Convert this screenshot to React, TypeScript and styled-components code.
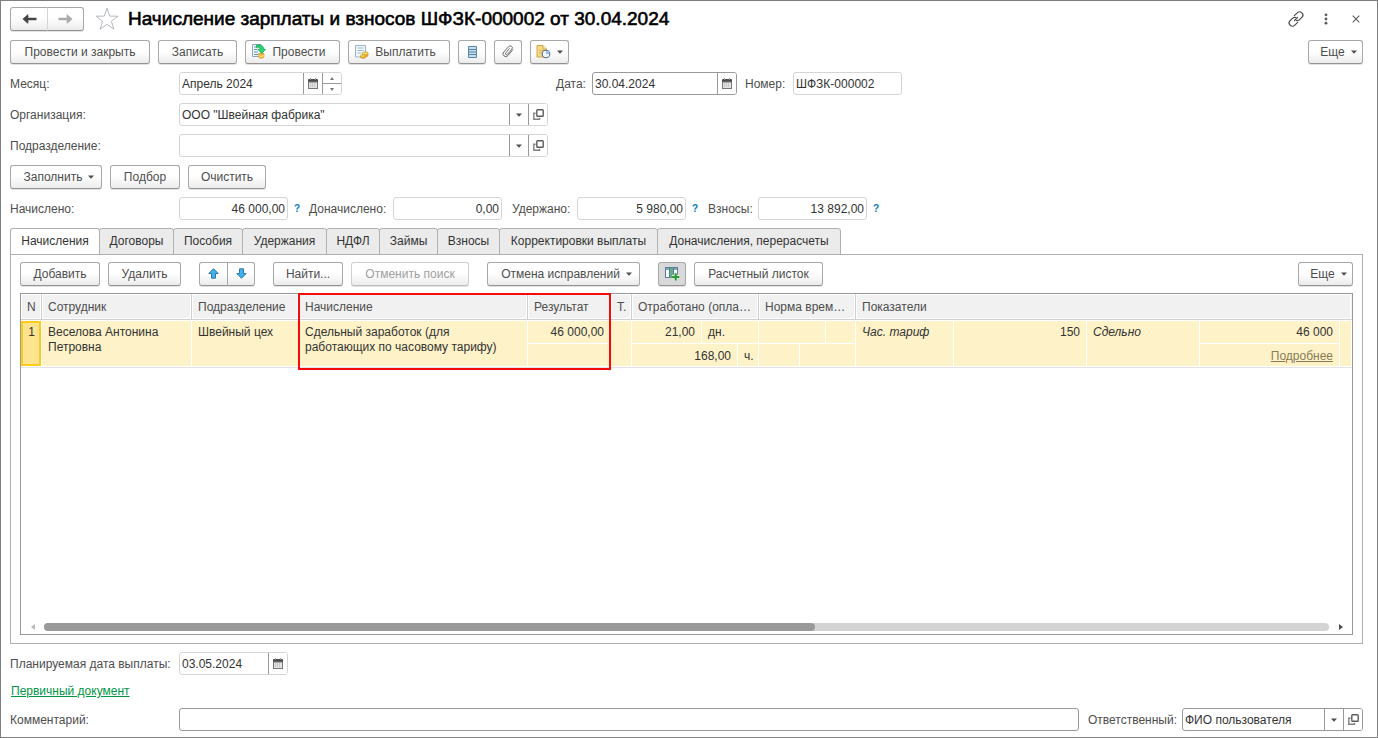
import React from 'react';
import styled, { createGlobalStyle, css } from 'styled-components';

const GlobalStyle = createGlobalStyle`
  * { box-sizing: border-box; }
  body { margin: 0; background: #fff; }
  body, button, input, select, table {
    font-family: "Liberation Sans", Arial, sans-serif;
    font-size: 12px;
    color: #333;
  }
  svg { display: block; flex: none; }
`;

const c = {
  text: '#4d4d4d',
  dark: '#333333',
  line: '#a8a8a8',
  soft: '#d5d5d5',
  cell: '#fef2c8',
};

/* ---------- page frame ---------- */

const Page = styled.div`
  min-height: 100vh;
  display: flex;
  flex-direction: column;
  gap: 8px;
  padding: 5px 14px 6px 9px;
  border: 1px solid #7f7f7f;
  background: #fff;
`;

const TitleRow = styled.header`
  display: flex;
  align-items: center;
  height: 26px;
  margin-right: -8px;
`;

const Title = styled.h1`
  flex: 1;
  margin: 0 0 0 6px;
  font-size: 19px;
  line-height: 24px;
  font-weight: 400;
  color: #000;
  -webkit-text-stroke: 0.6px #000;
  white-space: nowrap;
`;

const Row = styled.div`
  display: flex;
  align-items: center;
  gap: 8px;
`;

const Spacer = styled.div`
  flex: 1;
`;

const IconButton = styled.button`
  display: flex;
  align-items: center;
  justify-content: center;
  width: 30px;
  height: 24px;
  padding: 0;
  border: 0;
  background: none;
`;

const StarButton = styled(IconButton)`
  margin-left: 8px;
`;

/* ---------- buttons ---------- */

const Button = styled.button<{ $w: number; $pressed?: boolean }>`
  display: inline-flex;
  align-items: center;
  justify-content: center;
  gap: 6px;
  width: ${p => p.$w}px;
  height: 24px;
  padding: 0 0 1px;
  border: 1px solid ${c.line};
  border-bottom-color: #939393;
  border-radius: 3px;
  background: ${p => (p.$pressed ? '#d8d8d8' : 'linear-gradient(#fff 45%, #ececec)')};
  box-shadow: 0 1px 0 #e2e2e2;
  color: ${c.text};
  line-height: 20px;
  white-space: nowrap;

  &:disabled {
    color: #a0a0a0;
    border-color: #cfcfcf;
    border-bottom-color: #bdbdbd;
  }
`;

const MenuButton = styled(Button)`
  padding-left: 6px;
`;

const PictureButton = styled(Button)`
  padding-right: 7px;
`;

const Pair = styled.div`
  display: flex;

  & > button:first-child {
    border-radius: 3px 0 0 3px;
  }
  & > button:last-child {
    margin-left: -1px;
    border-radius: 0 3px 3px 0;
  }
`;

const NavPair = styled(Pair)`
  & > button:last-child {
    border-left-color: ${c.soft};
  }
`;

const ToolGroup = styled.div`
  display: flex;
  gap: 8px;
  margin-right: 10px;
`;

/* ---------- form fields ---------- */

const Label = styled.label<{ $w?: number }>`
  width: ${p => (p.$w ? `${p.$w}px` : 'auto')};
  color: ${c.text};
  line-height: 16px;
  white-space: nowrap;
`;

const FieldBox = styled.div<{ $w?: number; $strong?: boolean }>`
  display: flex;
  ${p => (p.$w ? css`width: ${p.$w}px;` : css`flex: 1;`)}
  height: 23px;
  border: 1px solid ${p => (p.$strong ? '#999' : c.soft)};
  border-radius: 3px;
  background: #fff;
  overflow: hidden;
`;

const Input = styled.input<{ $right?: boolean }>`
  flex: 1;
  min-width: 0;
  padding: 0 2px;
  border: 0;
  outline: 0;
  background: none;
  color: ${c.dark};
  text-align: ${p => (p.$right ? 'right' : 'left')};
`;

const FieldButton = styled.button`
  display: flex;
  align-items: center;
  justify-content: center;
  width: 19px;
  padding: 0;
  border: 0;
  border-left: 1px solid #999;
  background: #fff;
`;

const Spin = styled.div`
  display: flex;
  flex-direction: column;
  width: 19px;
  border-left: 1px solid #999;
`;

const SpinButton = styled.button`
  display: flex;
  flex: 1;
  align-items: center;
  justify-content: center;
  padding: 0;
  border: 0;
  background: #fff;

  & + & {
    border-top: 1px solid #999;
  }
`;

const LeftFields = styled.div`
  display: flex;
  align-items: center;
  width: 538px;
`;

const Totals = styled.div`
  display: grid;
  grid-template-columns: 169px 109px 21px 84px 109px 10px 65px 109px 22px 50px 109px 18px;
  align-items: center;
`;

const Help = styled.button`
  padding: 0;
  border: 0;
  background: none;
  color: #0a7abf;
  font-size: 10px;
  font-weight: 700;
  justify-self: start;
  margin-left: 6px;
`;

/* ---------- tabs ---------- */

const Tabs = styled.section`
  flex: 1;
  display: flex;
  flex-direction: column;
`;

const TabList = styled.div`
  display: flex;
`;

const Tab = styled.button<{ $w: number; $active?: boolean }>`
  width: ${p => p.$w}px;
  height: 27px;
  margin-bottom: -1px;
  padding: 0 0 2px;
  border: 1px solid #b0b0b0;
  border-radius: 3px 3px 0 0;
  background: ${p => (p.$active ? '#fff' : '#ebebeb')};
  ${p => p.$active && css`border-bottom-color: #fff;`}
  color: ${c.dark};
  white-space: nowrap;

  & + & {
    margin-left: -1px;
  }
`;

const Panel = styled.div`
  flex: 1;
  display: flex;
  flex-direction: column;
  gap: 7px;
  padding: 7px 9px 8px;
  border: 1px solid #b0b0b0;
`;

/* ---------- table ---------- */

const Grid = styled.div`
  position: relative;
  flex: 1;
  display: flex;
  flex-direction: column;
  border: 1px solid #999;
`;

const Highlight = styled.div`
  position: absolute;
  top: -1px;
  left: 277px;
  width: 313px;
  height: 77px;
  border: 2px solid #f50a0a;
  pointer-events: none;
`;

const Table = styled.table`
  width: 100%;
  table-layout: fixed;
  border-collapse: separate;
  border-spacing: 0;
`;

const Th = styled.th`
  height: 26px;
  padding: 0 2px 1px 6px;
  border-top: 1px solid #fff;
  border-right: 1px solid #cfcfcf;
  border-bottom: 1px solid #cfd0d6;
  background: #f1f1f1;
  box-shadow: inset -1px -1px 0 #fff, inset 1px 0 0 #fff;
  color: ${c.text};
  font-weight: 400;
  text-align: left;
  white-space: nowrap;

  &:last-child {
    border-right-color: #f1f1f1;
  }
`;

const Td = styled.td<{ $right?: boolean; $italic?: boolean }>`
  height: 23px;
  padding: 5px 6px 0;
  border-right: 1px solid #fff;
  border-bottom: 1px solid #fff;
  background: ${c.cell};
  color: ${c.dark};
  line-height: 15px;
  vertical-align: top;
  text-align: ${p => (p.$right ? 'right' : 'left')};
  font-style: ${p => (p.$italic ? 'italic' : 'normal')};
  white-space: ${p => (p.rowSpan === 2 ? 'normal' : 'nowrap')};

  tr:first-child > & {
    border-top: 1px solid #fff;
    height: 24px;
    padding-top: 4px;
  }
`;

const ActiveTd = styled(Td)`
  padding: 4px 4px 0 5px;
  background: #ffe48f;
  box-shadow: inset 0 0 0 2px #fccb1c;
  text-align: center;
`;

const RowEnd = styled.div`
  height: 1px;
  background: #e2e2e2;
`;

const MoreLink = styled.a`
  color: #857b55;
`;

const ScrollRow = styled.div`
  display: flex;
  align-items: center;
  height: 14px;
`;

const ScrollArrow = styled.button`
  display: flex;
  align-items: center;
  justify-content: center;
  width: 23px;
  height: 14px;
  padding: 0;
  border: 0;
  background: none;
`;

const Track = styled.div`
  flex: 1;
  height: 8px;
  border-radius: 4px;
  background: #d4d4d4;
`;

const Thumb = styled.div`
  width: 60%;
  height: 8px;
  border-radius: 4px;
  background: #999;
`;

/* ---------- footer ---------- */

const DocLink = styled.a`
  align-self: flex-start;
  margin-left: 1px;
  color: #009646;
  line-height: 17px;
`;

const Footer = styled.div`
  display: flex;
  align-items: center;
`;

const OwnerLabel = styled(Label)`
  margin-left: 9px;
`;

/* ---------- icons ---------- */

const Caret = () => (
  <svg width="6" height="4" viewBox="0 0 6 4"><path d="M0 0.5h6L3 3.8z" fill="#4d4d4d" /></svg>
);

const Arrow = ({ right, color }: { right?: boolean; color: string }) => (
  <svg width="15" height="12" viewBox="0 0 15 12">
    <g transform={right ? 'matrix(-1 0 0 1 15 0)' : undefined}>
      <path d="M.5 6L6.200 .9V4.700H14.500V7.300H6.200V11.100z" fill={color} />
      <path d="M6.200 3.400L3.900 6 6.200 8.600" fill="none" stroke={color} />
    </g>
  </svg>
);

const Star = () => (
  <svg width="24" height="24" viewBox="0 0 24 24">
    <path d="M12 1.2l2.7 7.9 8.4.1-6.7 5 2.5 8-6.9-4.8-6.9 4.8 2.5-8-6.7-5 8.4-.1z" fill="#fff" stroke="#b4b9bf" strokeWidth="1" />
  </svg>
);

const LinkIcon = () => (
  <svg width="18" height="18" viewBox="0 0 18 18" fill="none" stroke="#4d4d4d" strokeWidth="1.2" strokeLinecap="round">
    <path d="M7.300 5.700l2.900-2.900a3.200 3.200 0 0 1 4.700 0 3.200 3.200 0 0 1 0 4.500l-2.400 2.400a3.200 3.200 0 0 1-3.200.8" />
    <path d="M10.700 12.300l-2.900 2.900a3.200 3.200 0 0 1-4.700 0 3.200 3.200 0 0 1 0-4.500l2.400-2.400a3.200 3.200 0 0 1 3.200-.8" />
    <path d="M7.500 10.500l3-3" />
  </svg>
);

const Dots = () => (
  <svg width="4" height="12" viewBox="0 0 4 12" fill="#5c5c5c">
    <circle cx="2" cy="1.8" r="1.4" /><circle cx="2" cy="6" r="1.4" /><circle cx="2" cy="10.2" r="1.4" />
  </svg>
);

const Cross = () => (
  <svg width="8" height="8" viewBox="0 0 8 8"><path d="M.7.7l6.6 6.6M7.3.7L.7 7.3" stroke="#5c5c5c" strokeWidth="1.1" /></svg>
);

const Calendar = () => (
  <svg width="10" height="11" viewBox="0 0 10 11">
    <path d="M0 2a1 1 0 0 1 1-1h8a1 1 0 0 1 1 1v2H0z" fill="#4d4d4d" />
    <path d="M2 0h1v2H2zM7 0h1v2H7z" fill="#999" />
    <rect x=".5" y="4" width="9" height="6.5" fill="#e4e4e4" stroke="#777" />
    <path d="M2 6h6M2 8h6" stroke="#aaa" strokeDasharray="1 1" />
  </svg>
);

const OpenIcon = () => (
  <svg width="11" height="11" viewBox="0 0 11 11" fill="none" stroke="#5c5c5c" strokeWidth="1.4">
    <rect x="3.8" y=".8" width="6.4" height="6.4" rx=".8" />
    <path d="M2.600 4.200H.8v6h5.700V8.800" stroke="#808080" />
  </svg>
);

const SpinMark = ({ up }: { up?: boolean }) => (
  <svg width="4" height="3" viewBox="0 0 4 3"><path d={up ? 'M0 3L2 0l2 3z' : 'M0 0l2 3 2-3z'} fill="#777" /></svg>
);

const PostIcon = () => (
  <svg width="14" height="15" viewBox="0 0 14 15">
    <path d="M.5.5h8.500v12H.5z" fill="#f4f8fb" stroke="#8aa3b8" />
    <path d="M2 3h3M2 5.500h3M2 8h4M2 10.500h4" stroke="#5f8fb5" />
    <path d="M6.500 9.500v3.500c0 1.600 5.500 1.600 5.500 0V9.500z" fill="#efbd3c" stroke="#c4931e" strokeWidth=".6" />
    <path d="M6.500 11.300c0 1.400 5.500 1.400 5.500 0" fill="none" stroke="#fff0a8" strokeWidth=".8" />
    <path d="M4.500 1.300C8.500.3 11.700 1.800 11.700 5.300h1.900L9.800 9.300 5.700 5.300h2.500C8.200 3.500 6.800 2.900 4.500 3.300z" fill="#25d873" stroke="#0d9c48" strokeWidth=".7" />
  </svg>
);

const PayIcon = () => (
  <svg width="14" height="14" viewBox="0 0 14 14">
    <path d="M.5.5h10v11.500H.5z" fill="#f1f6fa" stroke="#9fb4c6" />
    <path d="M2.500 3h6M2.500 5.500h6M2.500 8h4" stroke="#9bbad2" />
    <path d="M7.500 8.500v2.300c0 1.500 5.500 1.500 5.500 0V8.500z" fill="#e9b02e" stroke="#c8951c" strokeWidth=".6" />
    <ellipse cx="10.300" cy="8.500" rx="2.800" ry="1.600" fill="#fbd75e" stroke="#c8951c" strokeWidth=".7" />
    <path d="M5.500 11v1.200c0 1.600 5 1.600 5 0V11z" fill="#e9b02e" stroke="#c8951c" strokeWidth=".6" />
    <ellipse cx="8" cy="11" rx="2.500" ry="1.300" fill="#fbd75e" stroke="#c8951c" strokeWidth=".6" />
  </svg>
);

const Register = () => (
  <svg width="9" height="12" viewBox="0 0 9 12">
    <path d="M.5.5h8v11h-8z" fill="#c4dcec" stroke="#5a87a8" />
    <path d="M1 3.500h7M1 6h7M1 8.500h7" stroke="#5a87a8" />
  </svg>
);

const Clip = () => (
  <svg width="12" height="13" viewBox="0 0 12 13" fill="none" stroke="#6a6a6a" strokeWidth="1" strokeLinecap="round">
    <path d="M10.800 4.700L6.100 10.500a2.700 2.700 0 0 1-4.500-3.300L6.600 1.700a2 2 0 0 1 3.300 2.400L5.500 9.300a1.100 1.100 0 0 1-1.800-1.300L7.400 3.700" />
  </svg>
);

const NoteClock = () => (
  <svg width="15" height="15" viewBox="0 0 15 15">
    <path d="M1 1.500h6l3.500 3.500v8H1z" fill="#f6d985" stroke="#cfa84a" />
    <path d="M7 1.500v3.500h3.500" fill="#fff1c2" stroke="#cfa84a" />
    <path d="M3 6.500h5M3 9h3" stroke="#d8b45a" />
    <circle cx="10" cy="10" r="3.800" fill="#f2f7fc" stroke="#5c6f8c" strokeWidth="1.100" />
    <path d="M10 7v3h3A3 3 0 0 0 10 7z" fill="#8fbdec" />
  </svg>
);

const Move = ({ down }: { down?: boolean }) => (
  <svg width="11" height="11" viewBox="0 0 11 11">
    <path d="M5.500.7l4.700 4.800H7.500v4.700h-4V5.500H.8z" transform={down ? 'rotate(180 5.500 5.500)' : undefined}
      fill="#3fb0f0" stroke="#256fa5" strokeWidth=".9" strokeLinejoin="round" />
  </svg>
);

const ColumnsPlus = () => (
  <svg width="15" height="14" viewBox="0 0 15 14">
    <rect x=".5" y=".5" width="12" height="10" fill="#fff" stroke="#5b7d96" />
    <path d="M1 1h11v2H1z" fill="#7fa6c0" />
    <path d="M5 1h3.500v9.500H5z" fill="#5fae8a" />
    <path d="M4.500 1v9.500M8.500 1v9.500" stroke="#5b7d96" />
    <path d="M10.500 6v7.500M7 9.800h7.500" stroke="#e4f2e0" strokeWidth="3.400" />
    <path d="M10.700 6.300v7.200M7.100 9.900h7.200" stroke="#27992f" strokeWidth="2" />
  </svg>
);

const Side = ({ right }: { right?: boolean }) => (
  <svg width="4" height="6" viewBox="0 0 4 6"><path d={right ? 'M0 0l4 3-4 3z' : 'M4 0L0 3l4 3z'} fill={right ? '#4d4d4d' : '#bbb'} /></svg>
);

/* ---------- composite controls ---------- */

const DateField = ({ id, w, value, strong, spin }: { id: string; w: number; value: string; strong?: boolean; spin?: boolean }) => (
  <FieldBox $w={w} $strong={strong}>
    <Input id={id} defaultValue={value} />
    <FieldButton aria-label="Календарь"><Calendar /></FieldButton>
    {spin && (
      <Spin>
        <SpinButton aria-label="Вперед"><SpinMark up /></SpinButton>
        <SpinButton aria-label="Назад"><SpinMark /></SpinButton>
      </Spin>
    )}
  </FieldBox>
);

const RefField = ({ id, w, value, strong }: { id: string; w: number; value: string; strong?: boolean }) => (
  <FieldBox $w={w} $strong={strong}>
    <Input id={id} defaultValue={value} />
    <FieldButton aria-label="Выбрать"><Caret /></FieldButton>
    <FieldButton aria-label="Открыть"><OpenIcon /></FieldButton>
  </FieldBox>
);

const Amount = ({ id, value }: { id: string; value: string }) => (
  <FieldBox $w={109}><Input id={id} $right readOnly value={value} /></FieldBox>
);

const tabs: [string, number][] = [
  ['Начисления', 90], ['Договоры', 75], ['Пособия', 70], ['Удержания', 85], ['НДФЛ', 54],
  ['Займы', 59], ['Взносы', 63], ['Корректировки выплаты', 159], ['Доначисления, перерасчеты', 184],
];

const columns = [21, 150, 107, 229, 83, 21, 70, 36, 21, 41, 26, 30, 98, 133, 113, 140];

export default function App() {
  return (
    <>
      <GlobalStyle />
      <Page>
        <TitleRow>
          <NavPair>
            <Button $w={38} aria-label="Назад"><Arrow color="#444" /></Button>
            <Button $w={37} aria-label="Вперед"><Arrow right color="#aaa" /></Button>
          </NavPair>
          <StarButton aria-label="В избранное"><Star /></StarButton>
          <Title>Начисление зарплаты и взносов ШФЗК-000002 от 30.04.2024</Title>
          <IconButton aria-label="Ссылка"><LinkIcon /></IconButton>
          <IconButton aria-label="Меню"><Dots /></IconButton>
          <IconButton aria-label="Закрыть"><Cross /></IconButton>
        </TitleRow>

        <Row>
          <Button $w={140}>Провести и закрыть</Button>
          <Button $w={79}>Записать</Button>
          <PictureButton $w={95}><PostIcon />Провести</PictureButton>
          <PictureButton $w={102}><PayIcon />Выплатить</PictureButton>
          <Button $w={28} aria-label="Движения"><Register /></Button>
          <Button $w={28} aria-label="Файлы"><Clip /></Button>
          <Button $w={39} aria-label="Напоминание"><NoteClock /><Caret /></Button>
          <Spacer />
          <MenuButton $w={55}>Еще<Caret /></MenuButton>
        </Row>

        <Row>
          <LeftFields>
            <Label $w={169} htmlFor="month">Месяц:</Label>
            <DateField id="month" w={163} value="Апрель 2024" spin />
          </LeftFields>
          <Label $w={28} htmlFor="date">Дата:</Label>
          <DateField id="date" w={145} value="30.04.2024" strong />
          <Label $w={40} htmlFor="number">Номер:</Label>
          <FieldBox $w={109}><Input id="number" defaultValue="ШФЗК-000002" /></FieldBox>
        </Row>

        <LeftFields>
          <Label $w={169} htmlFor="org">Организация:</Label>
          <RefField id="org" w={369} value={'ООО "Швейная фабрика"'} />
        </LeftFields>
        <LeftFields>
          <Label $w={169} htmlFor="dept">Подразделение:</Label>
          <RefField id="dept" w={369} value="" />
        </LeftFields>

        <Row>
          <MenuButton $w={92}>Заполнить<Caret /></MenuButton>
          <Button $w={70}>Подбор</Button>
          <Button $w={78}>Очистить</Button>
        </Row>

        <Totals>
          <Label htmlFor="t1">Начислено:</Label><Amount id="t1" value="46 000,00" /><Help>?</Help>
          <Label htmlFor="t2">Доначислено:</Label><Amount id="t2" value="0,00" /><span />
          <Label htmlFor="t3">Удержано:</Label><Amount id="t3" value="5 980,00" /><Help>?</Help>
          <Label htmlFor="t4">Взносы:</Label><Amount id="t4" value="13 892,00" /><Help>?</Help>
        </Totals>

        <Tabs>
          <TabList role="tablist">
            {tabs.map(([name, w], i) => (
              <Tab key={name} role="tab" aria-selected={i === 0} $w={w} $active={i === 0}>{name}</Tab>
            ))}
          </TabList>
          <Panel role="tabpanel">
            <Row>
              <ToolGroup>
                <Button $w={80}>Добавить</Button>
                <Button $w={73}>Удалить</Button>
              </ToolGroup>
              <ToolGroup>
                <Pair>
                  <Button $w={29} aria-label="Вверх"><Move /></Button>
                  <Button $w={28} aria-label="Вниз"><Move down /></Button>
                </Pair>
              </ToolGroup>
              <ToolGroup>
                <Button $w={70}>Найти...</Button>
                <Button $w={118} disabled>Отменить поиск</Button>
              </ToolGroup>
              <ToolGroup>
                <MenuButton $w={153}>Отмена исправлений<Caret /></MenuButton>
              </ToolGroup>
              <Button $w={28} $pressed aria-label="Показать колонки"><ColumnsPlus /></Button>
              <Button $w={129}>Расчетный листок</Button>
              <Spacer />
              <MenuButton $w={55}>Еще<Caret /></MenuButton>
            </Row>

            <Grid>
              <Table>
                <colgroup>
                  {columns.map((w, i) => <col key={i} width={w} />)}
                  <col />
                </colgroup>
                <thead>
                  <tr>
                    <Th>N</Th>
                    <Th>Сотрудник</Th>
                    <Th>Подразделение</Th>
                    <Th>Начисление</Th>
                    <Th>Результат</Th>
                    <Th>Т.</Th>
                    <Th colSpan={3}>Отработано (опла…</Th>
                    <Th colSpan={3}>Норма врем…</Th>
                    <Th colSpan={5}>Показатели</Th>
                  </tr>
                </thead>
                <tbody>
                  <tr>
                    <ActiveTd rowSpan={2}>1</ActiveTd>
                    <Td rowSpan={2}>Веселова Антонина Петровна</Td>
                    <Td rowSpan={2}>Швейный цех</Td>
                    <Td rowSpan={2}>Сдельный заработок (для работающих по часовому тарифу)</Td>
                    <Td $right>46 000,00</Td>
                    <Td rowSpan={2} />
                    <Td $right>21,00</Td>
                    <Td colSpan={2}>дн.</Td>
                    <Td colSpan={2} />
                    <Td />
                    <Td rowSpan={2} $italic>Час. тариф</Td>
                    <Td rowSpan={2} $right>150</Td>
                    <Td rowSpan={2} $italic>Сдельно</Td>
                    <Td $right>46 000</Td>
                    <Td rowSpan={2} />
                  </tr>
                  <tr>
                    <Td />
                    <Td colSpan={2} $right>168,00</Td>
                    <Td>ч.</Td>
                    <Td />
                    <Td colSpan={2} />
                    <Td $right><MoreLink href="#details">Подробнее</MoreLink></Td>
                  </tr>
                </tbody>
              </Table>
              <RowEnd />
              <Spacer />
              <ScrollRow>
                <ScrollArrow aria-label="Прокрутить влево"><Side /></ScrollArrow>
                <Track><Thumb /></Track>
                <ScrollArrow aria-label="Прокрутить вправо"><Side right /></ScrollArrow>
              </ScrollRow>
              <Highlight />
            </Grid>
          </Panel>
        </Tabs>

        <Footer>
          <Label $w={169} htmlFor="paydate">Планируемая дата выплаты:</Label>
          <DateField id="paydate" w={109} value="03.05.2024" />
        </Footer>
        <DocLink href="#source">Первичный документ</DocLink>
        <Footer>
          <Label $w={169} htmlFor="comment">Комментарий:</Label>
          <FieldBox $strong><Input id="comment" defaultValue="" /></FieldBox>
          <OwnerLabel $w={94} htmlFor="owner">Ответственный:</OwnerLabel>
          <RefField id="owner" w={181} value="ФИО пользователя" strong />
        </Footer>
      </Page>
    </>
  );
}
